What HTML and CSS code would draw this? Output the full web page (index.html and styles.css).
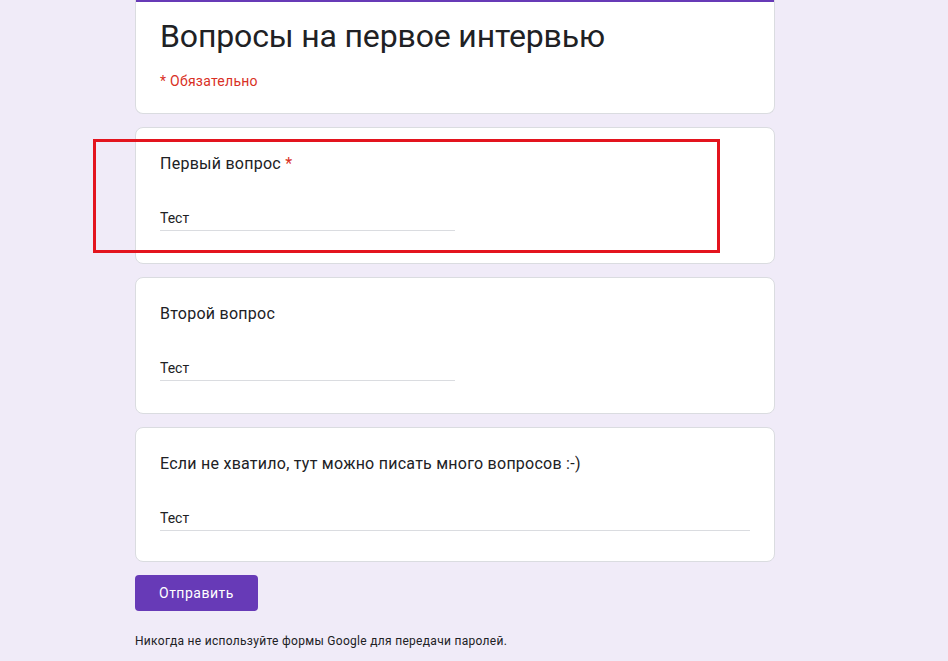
FILE: index.html
```html
<!DOCTYPE html>
<html lang="ru">
<head>
<meta charset="utf-8">
<title>Вопросы на первое интервью</title>
<link rel="stylesheet" href="styles.css">
</head>
<body>
<div class="form">
  <div class="card header">
    <h1 class="title">Вопросы на первое интервью</h1>
    <div class="required-note">* Обязательно</div>
  </div>
  <div class="card question">
    <div class="q-title">Первый вопрос <span class="star">*</span></div>
    <div class="answer">Тест</div>
  </div>
  <div class="card question">
    <div class="q-title">Второй вопрос</div>
    <div class="answer">Тест</div>
  </div>
  <div class="card question long">
    <div class="q-title">Если не хватило, тут можно писать много вопросов :-)</div>
    <div class="answer">Тест</div>
  </div>
  <button class="submit" type="button">Отправить</button>
  <p class="footer">Никогда не используйте формы Google для передачи паролей.</p>
</div>
<div class="highlight"></div>
</body>
</html>
```

FILE: styles.css
```css
html, body {
  margin: 0;
  padding: 0;
}
body {
  background: #f0ebf8;
  font-family: Roboto, "Liberation Sans", Arial, sans-serif;
  color: #202124;
  width: 948px;
  height: 661px;
  overflow: hidden;
  position: relative;
}
.form {
  width: 640px;
  margin-left: 135px;
  display: flex;
  flex-direction: column;
  align-items: flex-start;
}
.card {
  box-sizing: border-box;
  width: 640px;
  background: #fff;
  border: 1px solid #dadce0;
  border-radius: 8px;
  margin-bottom: 13px;
}
.header {
  border-top: 10px solid #673ab7;
  margin-top: -8px;
  padding: 14px 24px 22px;
}
.title {
  margin: 0;
  font-size: 32px;
  font-weight: 400;
  line-height: 40px;
  letter-spacing: -0.15px;
  color: #202124;
}
.required-note {
  margin-top: 15px;
  font-size: 14px;
  line-height: 20px;
  letter-spacing: 0.25px;
  color: #d93025;
}
.question {
  padding: 24px 24px 32px;
}
.q-title {
  font-size: 16px;
  line-height: 24px;
  letter-spacing: 0.25px;
  color: #202124;
}
.star {
  color: #d93025;
}
.answer {
  margin-top: 32px;
  width: 295px;
  font-size: 14px;
  line-height: 20px;
  padding-bottom: 2px;
  border-bottom: 1px solid #dadce0;
  color: #202124;
}
.long {
  padding-bottom: 30px;
}
.long .answer {
  margin-top: 32px;
  width: 100%;
}
.submit {
  height: 36px;
  padding: 0 24px;
  background: #673ab7;
  color: #fff;
  border: none;
  border-radius: 4px;
  font-family: inherit;
  font-size: 14px;
  letter-spacing: 0.5px;
}
.footer {
  margin: 22px 0 0;
  font-size: 12px;
  line-height: 16px;
  color: #202124;
  letter-spacing: 0.3px;
}
.highlight {
  position: absolute;
  left: 93px;
  top: 139px;
  width: 621px;
  height: 108px;
  border: 3px solid #e3141e;
}
```
